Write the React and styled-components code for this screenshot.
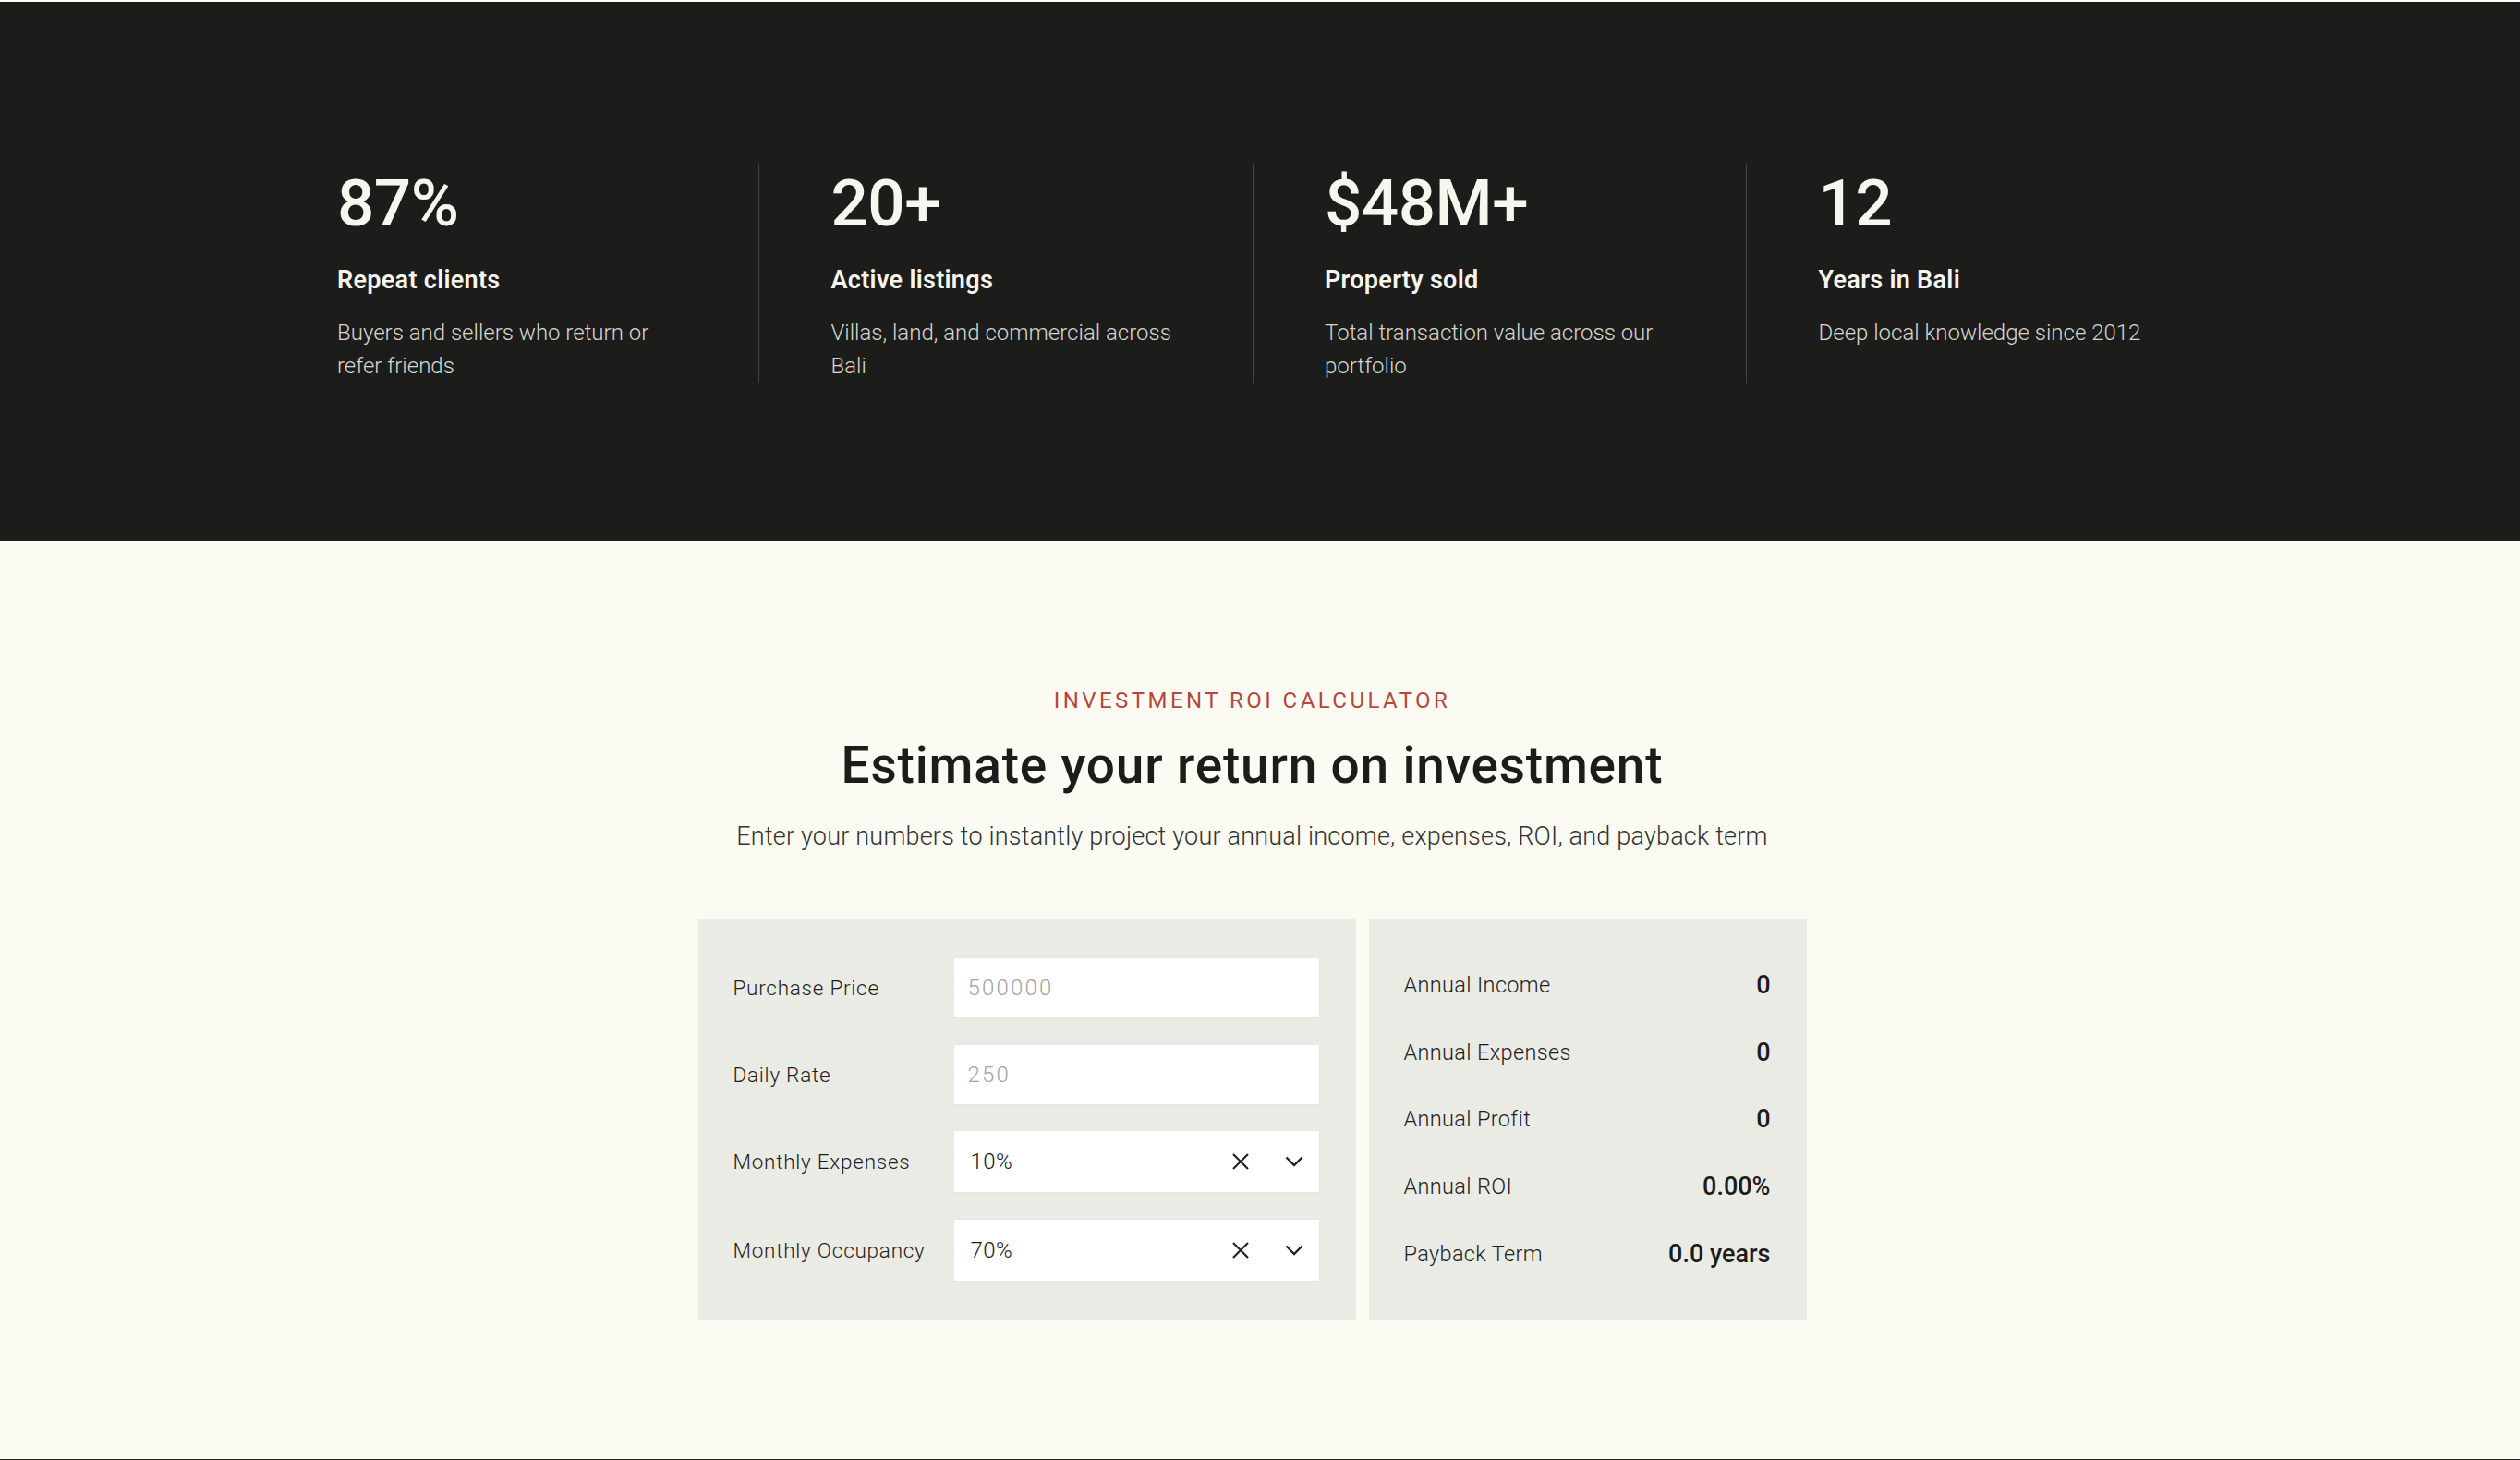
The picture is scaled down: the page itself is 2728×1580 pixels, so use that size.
import React from "react";
import styled, { createGlobalStyle } from "styled-components";

const GlobalStyle = createGlobalStyle`
  * { box-sizing: border-box; }
  html, body { margin: 0; padding: 0; }
  body {
    background: #fbfbf4;
    font-family: Roboto, "Liberation Sans", Arial, sans-serif;
    color: #1c1c1a;
    -webkit-font-smoothing: antialiased;
  }
`;

const Page = styled.main`
  display: flex;
  flex-direction: column;
  padding-top: 2px;
  min-height: 1580px;
`;

const StatsSection = styled.section`
  background: #1c1c1a;
  padding: 176px 17px 171.5px 0;
`;

const StatsGrid = styled.div`
  display: grid;
  grid-template-columns: repeat(4, 534.5px);
  justify-content: center;
`;

const Stat = styled.div`
  display: flex;
  flex-direction: column;
  padding: 6px 40px 0 77.5px;
  border-left: 1px solid ${(p) => (p.$first ? "transparent" : "#45453f")};
`;

const StatValue = styled.div`
  font-size: 71px;
  line-height: 71px;
  font-weight: 500;
  color: #f7f6ee;
  letter-spacing: -0.5px;
`;

const StatTitle = styled.div`
  margin-top: 31px;
  font-size: 27px;
  line-height: 35px;
  font-weight: 600;
  letter-spacing: 0.3px;
  color: #f7f6ee;
`;

const StatText = styled.p`
  margin: 20.5px 0 0;
  max-width: 385px;
  font-size: 24px;
  line-height: 36.5px;
  font-weight: 300;
  color: #d6d5ce;
`;

const CalcSection = styled.section`
  flex: 1;
  display: flex;
  flex-direction: column;
  align-items: center;
  padding: 158px 17px 150px 0;
  background: #fbfbf4;
  border-bottom: 2px solid #2a2a27;
`;

const Eyebrow = styled.div`
  font-size: 24px;
  line-height: 29px;
  font-weight: 400;
  letter-spacing: 3.45px;
  color: #b5483c;
  text-transform: uppercase;
`;

const Heading = styled.h2`
  margin: 22px 0 0;
  font-size: 55px;
  line-height: 66px;
  font-weight: 500;
  letter-spacing: 0.8px;
  color: #1c1c1a;
`;

const Lead = styled.p`
  margin: 25px 0 0;
  font-size: 27px;
  line-height: 38px;
  font-weight: 300;
  letter-spacing: 0.2px;
  color: #33332f;
`;

const Calculator = styled.div`
  margin-top: 70px;
  display: grid;
  grid-template-columns: 712px 474px;
  gap: 14px;
`;

const Panel = styled.div`
  background: #ebebe6;
`;

const InputsPanel = styled(Panel)`
  display: flex;
  flex-direction: column;
  gap: 27.5px;
  padding: 42px 39px 42px 38px;
`;

const FieldRow = styled.label`
  display: grid;
  grid-template-columns: 238px 1fr;
  align-items: center;
`;

const FieldLabel = styled.span`
  font-size: 22.5px;
  font-weight: 300;
  letter-spacing: 0.75px;
  color: #1e1e1c;
`;

const TextInput = styled.input`
  height: 66px;
  width: 100%;
  border: 1px solid #f0e4e3;
  background: #fff;
  padding: 0 15px;
  font-family: inherit;
  font-size: 24px;
  font-weight: 300;
  letter-spacing: 2.2px;
  color: #1c1c1a;
  outline: none;
  &::placeholder { color: #a3a39e; }
`;

const SelectBox = styled.div`
  height: 68px;
  display: flex;
  align-items: center;
  border: 1px solid #f0e4e3;
  background: #fff;
`;

const SelectValue = styled.span`
  flex: 1;
  padding-left: 18px;
  font-size: 24px;
  font-weight: 300;
  letter-spacing: 0.4px;
  color: #1a1a18;
`;

const IndicatorButton = styled.span`
  display: flex;
  align-items: center;
  justify-content: center;
  height: 100%;
  padding: ${(p) => p.$pad};
  color: #222220;
`;

const Separator = styled.span`
  width: 1px;
  align-self: stretch;
  margin: 11px 0;
  background: #e6e1dd;
`;

const ResultsPanel = styled(Panel)`
  display: flex;
  flex-direction: column;
  justify-content: center;
  padding: 35px 39px 35px 38px;
`;

const ResultRow = styled.div`
  height: 72.75px;
  display: flex;
  align-items: center;
  justify-content: space-between;
`;

const ResultLabel = styled.span`
  font-size: 23.5px;
  font-weight: 300;
  letter-spacing: 0.35px;
  color: #1e1e1c;
`;

const ResultValue = styled.span`
  font-size: 27px;
  font-weight: 500;
  color: #1c1c1a;
`;

const ClearIcon = () => (
  <svg width="18" height="18" viewBox="0 0 18 18" fill="none" stroke="currentColor" strokeWidth="2.2" strokeLinecap="butt">
    <path d="M1 1 L17 17 M17 1 L1 17" />
  </svg>
);

const ChevronIcon = () => (
  <svg width="20" height="12" viewBox="0 0 20 12" fill="none" stroke="currentColor" strokeWidth="2.3" strokeLinejoin="miter">
    <path d="M1.5 1.5 L10 10 L18.5 1.5" />
  </svg>
);

const stats = [
  { value: "87%", title: "Repeat clients", text: "Buyers and sellers who return or refer friends" },
  { value: "20+", title: "Active listings", text: "Villas, land, and commercial across Bali" },
  { value: "$48M+", title: "Property sold", text: "Total transaction value across our portfolio" },
  { value: "12", title: "Years in Bali", text: "Deep local knowledge since 2012" },
];

const results = [
  ["Annual Income", "0"],
  ["Annual Expenses", "0"],
  ["Annual Profit", "0"],
  ["Annual ROI", "0.00%"],
  ["Payback Term", "0.0 years"],
];

const Select = ({ value }) => (
  <SelectBox>
    <SelectValue>{value}</SelectValue>
    <IndicatorButton $pad="0 18px 0 0">
      <ClearIcon />
    </IndicatorButton>
    <Separator />
    <IndicatorButton $pad="0 17px 0 20px">
      <ChevronIcon />
    </IndicatorButton>
  </SelectBox>
);

export default function App() {
  return (
    <>
      <GlobalStyle />
      <Page>
        <StatsSection>
          <StatsGrid>
            {stats.map((s, i) => (
              <Stat key={s.title} $first={i === 0}>
                <StatValue>{s.value}</StatValue>
                <StatTitle>{s.title}</StatTitle>
                <StatText>{s.text}</StatText>
              </Stat>
            ))}
          </StatsGrid>
        </StatsSection>

        <CalcSection>
          <Eyebrow>Investment ROI Calculator</Eyebrow>
          <Heading>Estimate your return on investment</Heading>
          <Lead>Enter your numbers to instantly project your annual income, expenses, ROI, and payback term</Lead>
          <Calculator>
            <InputsPanel>
              <FieldRow>
                <FieldLabel>Purchase Price</FieldLabel>
                <TextInput placeholder="500000" />
              </FieldRow>
              <FieldRow>
                <FieldLabel>Daily Rate</FieldLabel>
                <TextInput placeholder="250" />
              </FieldRow>
              <FieldRow as="div">
                <FieldLabel>Monthly Expenses</FieldLabel>
                <Select value="10%" />
              </FieldRow>
              <FieldRow as="div">
                <FieldLabel>Monthly Occupancy</FieldLabel>
                <Select value="70%" />
              </FieldRow>
            </InputsPanel>
            <ResultsPanel>
              {results.map(([label, value]) => (
                <ResultRow key={label}>
                  <ResultLabel>{label}</ResultLabel>
                  <ResultValue>{value}</ResultValue>
                </ResultRow>
              ))}
            </ResultsPanel>
          </Calculator>
        </CalcSection>
      </Page>
    </>
  );
}
